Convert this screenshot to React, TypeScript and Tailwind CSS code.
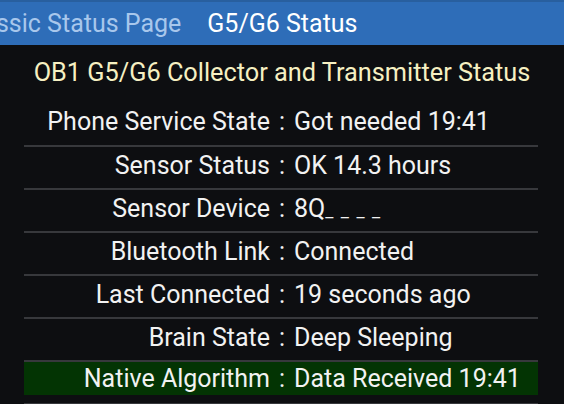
import React from "react";

const rows: { label: string; value: React.ReactNode; green?: boolean }[] = [
  { label: "Phone Service State", value: "Got needed 19:41" },
  { label: "Sensor Status", value: "OK 14.3 hours" },
  {
    label: "Sensor Device",
    value: (
      <>
        8Q<span className="text-[18px] tracking-[1.5px]">_ _ _ _</span>
      </>
    ),
  },
  { label: "Bluetooth Link", value: "Connected" },
  { label: "Last Connected", value: "19 seconds ago" },
  { label: "Brain State", value: "Deep Sleeping" },
  { label: "Native Algorithm", value: "Data Received 19:41", green: true },
];

export default function App() {
  return (
    <div
      className="w-[564px] h-[404px] overflow-hidden bg-[#0d0e11] text-[#f2f2f2]"
      style={{ fontFamily: "Roboto, 'Noto Sans', sans-serif" }}
    >
      <div className="h-[45px] bg-[#2e6db8] border-t-2 border-[#285f9f] flex items-center overflow-hidden whitespace-nowrap text-[25px]">
        <span className="ml-[-40px] shrink-0 text-[#a8c7ec]">Classic Status Page</span>
        <span className="ml-[26px] shrink-0 text-white">G5/G6 Status</span>
      </div>
      <div className="h-[57px] flex justify-center pt-[9px] text-[25.3px] text-[#f6f0c2] whitespace-nowrap">
        OB1 G5/G6 Collector and Transmitter Status
      </div>
      <div className="mx-[24px] w-[514px]">
        {rows.map((r, i) => (
          <div
            key={i}
            className={`h-[43px] flex flex-col ${i === 0 ? "" : "border-t-2 border-[#37383c]"}`}
          >
            <div
              className={`flex items-center whitespace-nowrap text-[25px] ${
                r.green ? "h-[33px] bg-[#033403]" : "flex-1 pb-[3px]"
              }`}
            >
              <div className="w-[246px] text-right">{r.label}</div>
              <div className="w-[24px] text-center">:</div>
              <div>{r.value}</div>
            </div>
          </div>
        ))}
        <div className="border-t-2 border-[#37383c]" />
      </div>
    </div>
  );
}
